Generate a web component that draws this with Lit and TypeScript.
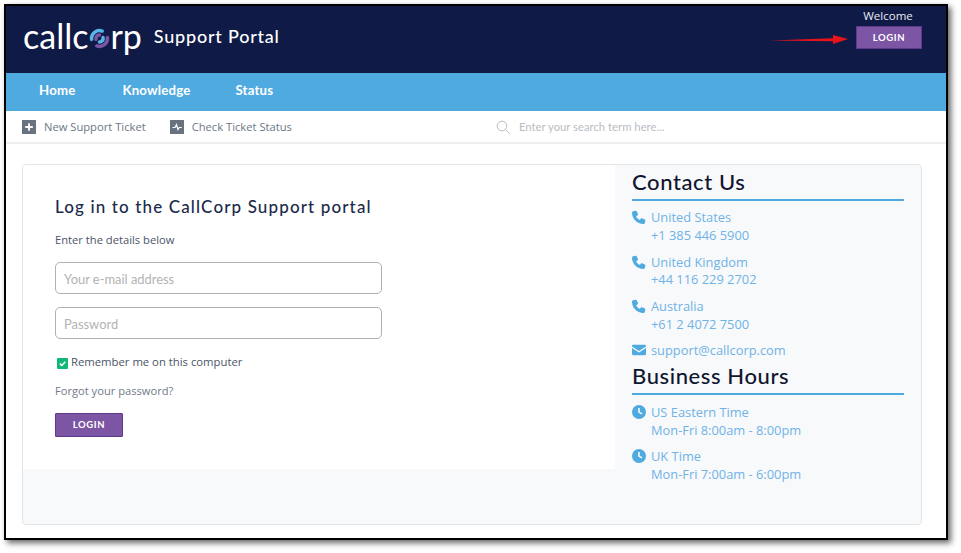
import { LitElement, html, css, svg } from "lit";
import { customElement } from "lit/decorators.js";

const phone = svg`<path d="M3.6.7 1.2 1.3C.5 1.5 0 2.1 0 2.8c0 6.800 5.400 12.200 12.200 12.200.7 0 1.300-.5 1.500-1.200l.6-2.400c.1-.5-.1-1-.6-1.200l-3-1.300c-.4-.2-.9-.1-1.200.3L8.400 10.600C6.600 9.700 5.300 8.400 4.400 6.600L6.100 5.500c.4-.3.5-.8.3-1.200L5 1.300C4.700.8 4.100.6 3.600.7Z"/>`;
const mail = svg`<path d="M1.400 2h12.200c.8 0 1.400.6 1.400 1.400v.3L7.500 8.700 0 3.700v-.3C0 2.600.6 2 1.400 2ZM0 5.300l7.500 5 7.500-5v6.300c0 .8-.6 1.400-1.400 1.400H1.400C.6 13 0 12.400 0 11.600Z"/>`;
const clock = svg`<path fill-rule="evenodd" d="M7.500 0a7.500 7.500 0 1 1 0 15 7.500 7.500 0 0 1 0-15ZM6.600 3.200v4.800l3.700 2.200.9-1.400-2.900-1.700V3.200Z"/>`;

const ico = (p: unknown) => html`<svg class="ico" viewBox="0 0 15 15" fill="currentColor">${p}</svg>`;

const contacts = [
  { i: phone, a: "United States", b: "+1 385 446 5900" },
  { i: phone, a: "United Kingdom", b: "+44 116 229 2702" },
  { i: phone, a: "Australia", b: "+61 2 4072 7500" },
  { i: mail, a: "support@callcorp.com", b: "" },
];
const hours = [
  { i: clock, a: "US Eastern Time", b: "Mon-Fri 8:00am - 8:00pm" },
  { i: clock, a: "UK Time", b: "Mon-Fri 7:00am - 6:00pm" },
];

@customElement("app-root")
export class AppRoot extends LitElement {
  static styles = css`
    :host { display: block; width: 961px; height: 553px; background: #fff; overflow: hidden; position: relative; font-family: "Open Sans", sans-serif; }
    * { box-sizing: border-box; }
    .frame { margin: 4px 0 0 4px; width: 944px; height: 536px; border: 2px solid #000; background: #fff; box-shadow: 3px 3px 6px #666; display: flex; flex-direction: column; overflow: hidden; }
    .head { height: 67px; background: #101a46; display: flex; justify-content: space-between; padding: 0 24px 0 17px; flex: none; }
    .brand { display: flex; align-items: flex-start; color: #fff; padding-top: 11px; }
    .logo { display: flex; align-items: center; font: 400 34px/38px "Lato", sans-serif; letter-spacing: 0; }
    .logo svg { width: 21px; height: 21px; margin: 4px 0 0 1px; }
    .portal { font: 500 18px/22px "Lato", sans-serif; letter-spacing: .78px; margin: 8px 0 0 12px; }
    .welcome { width: 66px; display: flex; flex-direction: column; align-items: center; color: #e8eaf2; font-size: 11.500px; line-height: 17px; padding-top: 1px; }
    .welcome span { margin-right: 2px; }
    .btn { background: #7c55a5; border: 1px solid #5e3a8c; color: #fff; font: 700 9.500px/1 "Lato", sans-serif; letter-spacing: .6px; display: flex; align-items: center; justify-content: center; }
    .welcome .btn { width: 66px; height: 23px; margin-top: 2px; }
    .nav { height: 38px; background: #4faae0; display: flex; gap: 45px; align-items: center; padding: 0 0 2px 33px; color: #fff; font: 700 13.200px/1 "Lato", sans-serif; letter-spacing: .2px; flex: none; }
    .nav span:first-child { margin-right: 2px; }
    .bar { height: 33px; display: flex; align-items: center; border-bottom: 2px solid #eeeeef; padding: 0 0 0 16px; font-size: 11.200px; color: #6d7785; flex: none; }
    .tool { display: flex; align-items: center; gap: 8px; margin-right: 24px; }
    .sq { width: 14px; height: 14px; background: #69737f; color: #fff; display: block; }
    .search { display: flex; align-items: center; gap: 9px; margin-left: 180px; font: 11.300px "Lato", sans-serif; color: #b9bdc3; }
    .search svg { width: 14px; height: 14px; }
    .main { flex: 1; padding: 20px 24px 13px 16px; display: flex; }
    .card { flex: 1; display: flex; border: 1px solid #e2e5ea; border-radius: 4px; background: #f8f9fb; overflow: hidden; }
    .left { width: 592px; height: 304px; background: #fff; padding: 32px 0 0 32px; color: #2b3a55; }
    h2 { margin: 0; font: 500 17px/20px "Lato", sans-serif; letter-spacing: 1.130px; color: #1c2a4a; }
    .sub { font-size: 11.200px; line-height: 16px; margin-top: 15px; color: #4a5568; }
    .inp { width: 327px; height: 32px; border: 1px solid #b0b0b0; border-radius: 5px; background: #fff; font: 12.900px "Lato", sans-serif; color: #b3b3b3; display: flex; align-items: center; padding: 1px 0 0 8px; }
    .sub + .inp { margin-top: 14px; }
    .inp + .inp { margin-top: 13px; }
    .rem { display: flex; align-items: center; gap: 3px; margin: 15px 0 0 2px; font-size: 11.300px; line-height: 16px; color: #4a5568; }
    .cb { width: 11px; height: 11px; background: #10b877; border-radius: 1px; display: block; margin-top: 2px; }
    .forgot { font-size: 11.150px; line-height: 16px; margin-top: 13px; color: #717a8a; }
    .left .btn { width: 68px; height: 24px; margin-top: 14px; border-radius: 1px; }
    .right { flex: 1; padding: 4px 17px 0 17px; }
    h3 { margin: 0; font: 500 22px/26px "Lato", sans-serif; letter-spacing: .6px; color: #10162f; border-bottom: 2px solid #4faae0; padding-bottom: 2px; height: 32px; }
    .list { margin: 8px 0 4px; display: flex; flex-direction: column; gap: 9px; }
    .list + h3 + .list { margin-top: 8.500px; }
    .item { display: flex; gap: 5px; color: #6fb3e6; font-size: 12.850px; line-height: 17.750px; }
    .item.single { margin-top: -1px; }
    .ico { width: 14px; height: 14px; color: #4faae0; flex: none; margin-top: 1px; }
    .item div { display: flex; flex-direction: column; }
    .arrow { position: absolute; left: 769px; top: 33px; width: 80px; height: 14px; }
  `;

  private group(rows: typeof contacts) {
    return html`<div class="list">${rows.map(r => html`<div class="item ${r.b ? "" : "single"}">${ico(r.i)}<div><span>${r.a}</span>${r.b ? html`<span>${r.b}</span>` : ""}</div></div>`)}</div>`;
  }

  render() {
    return html`
      <div class="frame">
        <header class="head">
          <div class="brand">
            <div class="logo">callc<svg viewBox="0 0 24 24" fill="none" stroke-width="4" stroke-linecap="round">
              <path d="M3 13A9 9 0 0 1 15 3.500" stroke="#55b4e8"/><path d="M8 13a4 4 0 0 1 4-5" stroke="#7c55a5"/>
              <path d="M21 11A9 9 0 0 1 9 20.500" stroke="#7c55a5"/><path d="M16 11a4 4 0 0 1-4 5" stroke="#55b4e8"/>
            </svg>rp</div>
            <div class="portal">Support Portal</div>
          </div>
          <div class="welcome"><span>Welcome</span><div class="btn">LOGIN</div></div>
        </header>
        <nav class="nav"><span>Home</span><span>Knowledge</span><span>Status</span></nav>
        <div class="bar">
          <div class="tool"><svg class="sq" viewBox="0 0 14 14"><path d="M7 3.200v7.600M3.200 7h7.600" stroke="currentColor" stroke-width="1.800" fill="none"/></svg>New Support Ticket</div>
          <div class="tool"><svg class="sq" viewBox="0 0 14 14"><path d="M2.500 7.500h2.500l1.500-3 1.500 5 1.200-2h2.500" stroke="currentColor" stroke-width="1.200" fill="none"/></svg>Check Ticket Status</div>
          <div class="search"><svg viewBox="0 0 14 14" fill="none" stroke="#b9bdc3" stroke-width="1"><circle cx="6" cy="6" r="4.800"/><path d="m9.500 9.500 4 4"/></svg>Enter your search term here...</div>
        </div>
        <div class="main">
          <div class="card">
            <section class="left">
              <h2>Log in to the CallCorp Support portal</h2>
              <div class="sub">Enter the details below</div>
              <div class="inp">Your e-mail address</div>
              <div class="inp">Password</div>
              <div class="rem"><svg class="cb" viewBox="0 0 11 11"><path d="m2.800 5.600 2 1.900 3.500-3.700" stroke="#fff" stroke-width="1.500" fill="none"/></svg>Remember me on this computer</div>
              <div class="forgot">Forgot your password?</div>
              <div class="btn">LOGIN</div>
            </section>
            <aside class="right">
              <h3>Contact Us</h3>
              ${this.group(contacts)}
              <h3>Business Hours</h3>
              ${this.group(hours)}
            </aside>
          </div>
        </div>
      </div>
      <svg class="arrow" viewBox="0 0 80 14"><path d="M1 7.500 64 5.200V8.200Z" fill="#e8141c"/><path d="M64 2l15 4-15 5Z" fill="#e8141c"/></svg>
    `;
  }
}
